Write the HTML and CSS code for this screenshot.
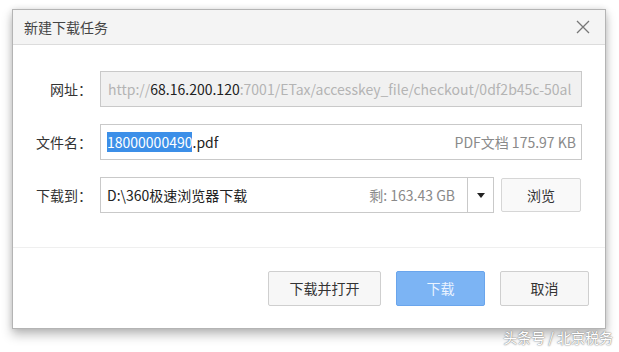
FILE: index.html
```html
<!DOCTYPE html>
<html lang="zh-CN">
<head>
  <meta charset="UTF-8" />
  <title>新建下载任务</title>
  <link rel="stylesheet" href="styles.css">
</head>
<body>
  <div class="dialog">
    <div class="titlebar">
      <span class="title">新建下载任务</span>
      <svg class="close" width="14" height="14" viewBox="0 0 14 14">
        <path d="M1 1 L13 13 M13 1 L1 13" stroke="#777" stroke-width="1.3" fill="none" />
      </svg>
    </div>
    <div class="form">
      <div class="row">
        <label>网址：</label>
        <div class="field url">http://<span class="host">68.16.200.120</span>:7001/ETax/accesskey_file/checkout/0df2b45c-50al</div>
      </div>
      <div class="row">
        <label>文件名：</label>
        <div class="field">
          <span><span class="sel">18000000490</span>.pdf</span>
          <span class="hint">PDF文档 175.97 KB</span>
        </div>
      </div>
      <div class="row">
        <label>下载到：</label>
        <div class="field path">
          <span>D:\360极速浏览器下载</span>
          <span class="hint">剩: 163.43 GB</span>
          <span class="drop"><i class="arrow"></i></span>
        </div>
        <button class="btn browse">浏览</button>
      </div>
    </div>
    <div class="footer">
      <button class="btn wide">下载并打开</button>
      <button class="btn primary">下载</button>
      <button class="btn">取消</button>
    </div>
  </div>
  <div class="mark">头条号 / 北京税务</div>
</body>
</html>
```

FILE: styles.css
```css
body {
  margin: 0;
  background: #fff;
  font-family: "Segoe UI", "Noto Sans CJK SC", sans-serif;
  color: #333;
  width: 619px;
  height: 352px;
  position: relative;
  overflow: hidden;
}
.dialog {
  margin: 9px 0 0 12px;
  width: 592px;
  height: 318px;
  border: 1px solid #b4b4b4;
  background: #fff;
  box-shadow: 0 6px 10px rgba(0, 0, 0, 0.25), 0 0 6px rgba(0, 0, 0, 0.12);
  display: flex;
  flex-direction: column;
}
.titlebar {
  height: 34px;
  background: #f4f4f4;
  border-bottom: 1px solid #dcdcdc;
  display: flex;
  align-items: center;
  justify-content: space-between;
  padding: 0 15px 0 11px;
}
.title {
  font-size: 14px;
  color: #444;
}
.form {
  padding: 26px 23px 0 0;
  display: flex;
  flex-direction: column;
  gap: 17px;
  height: 176px;
  border-bottom: 1px solid #efefef;
}
.row {
  display: flex;
  align-items: center;
  height: 36px;
}
.row label {
  width: 79px;
  margin-right: 8px;
  text-align: right;
  font-size: 14px;
  color: #333;
}
.field {
  flex: 1;
  height: 34px;
  border: 1px solid #c9c9c9;
  display: flex;
  align-items: center;
  justify-content: space-between;
  padding: 0 5px 0 6px;
  font-size: 14px;
  color: #222;
  white-space: nowrap;
  overflow: hidden;
}
.url {
  background: #f1f1f1;
  color: #b4b4b4;
  justify-content: flex-start;
  padding-left: 7px;
}
.host {
  color: #222;
}
.sel {
  background: #3c8fe8;
  color: #fff;
}
.hint {
  color: #8a8a8a;
  font-size: 14px;
}
.path {
  padding-right: 0;
  flex: none;
  width: 386px;
}
.path .hint {
  margin-left: auto;
  margin-right: 12px;
}
.drop {
  width: 25px;
  height: 34px;
  border-left: 1px solid #c9c9c9;
  display: flex;
  align-items: center;
  justify-content: center;
}
.arrow {
  width: 0;
  height: 0;
  border-left: 4px solid transparent;
  border-right: 4px solid transparent;
  border-top: 5px solid #222;
}
.btn {
  font-family: inherit;
  font-size: 14px;
  color: #333;
  background: #f7f7f7;
  border: 1px solid #cfcfcf;
  border-radius: 2px;
  width: 89px;
  height: 35px;
  padding: 0;
}
.browse {
  width: 80px;
  height: 34px;
  margin-left: 7px;
  background: #f9f9f9;
  border-color: #d6d6d6;
}
.footer {
  flex: 1;
  display: flex;
  justify-content: flex-end;
  align-items: center;
  gap: 15px;
  padding-right: 16px;
}
.wide {
  width: 113px;
}
.primary {
  background: #7cb4f4;
  border-color: #6aa5ec;
  color: #eaf3ff;
}
.mark {
  position: absolute;
  right: 6px;
  bottom: 5px;
  font-family: "Noto Sans CJK SC", sans-serif;
  font-size: 14px;
  color: #fff;
  text-shadow: 0 0 2px #888, 0 0 1px #666;
}
```
